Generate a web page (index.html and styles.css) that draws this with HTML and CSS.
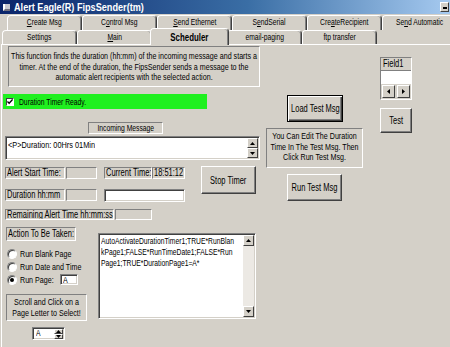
FILE: index.html
```html
<!DOCTYPE html>
<html lang="en">

<head>
    <meta charset="UTF-8">
    <title>Alert Eagle(R) FipsSender(tm)</title>
    <link rel="stylesheet" href="styles.css">
</head>

<body>

    <div class="titlebar">
        <span class="app-icon"></span>
        <span class="title">Alert Eagle(R) FipsSender(tm)</span>
        <span class="min-btn"><i></i></span>
    </div>

    <div class="tabs">
        <div class="tab-row back">
            <div class="tab"><span class="sqc"><u>C</u>reate Msg</span></div>
            <div class="tab"><span class="sqc">C<u>o</u>ntrol Msg</span></div>
            <div class="tab"><span class="sqc"><u>S</u>end Ethernet</span></div>
            <div class="tab"><span class="sqc">S<u>e</u>ndSerial</span></div>
            <div class="tab"><span class="sqc">Cre<u>a</u>teRecipient</span></div>
            <div class="tab"><span class="sqc">Se<u>n</u>d Automatic</span></div>
        </div>
        <div class="tab-row front">
            <div class="tab"><span class="sqc">Settings</span></div>
            <div class="tab"><span class="sqc"><u>M</u>ain</span></div>
            <div class="tab active"><span class="sqc">Scheduler</span></div>
            <div class="tab"><span class="sqc">email-paging</span></div>
            <div class="tab"><span class="sqc">ftp transfer</span></div>
        </div>
    </div>

    <div class="panel">

        <div class="col-left">
            <div class="box desc">
                <div class="sqb">This function finds the duration (hh:mm) of the incoming message and starts a<br>timer. At the end of the duration, the FipsSender sends a message to the<br>automatic alert recipients with the selected action.</div>
            </div>

            <div class="ready">
                <span class="check">
                    <svg width="7" height="7" viewBox="0 0 7 7"><path d="M0.5 3.5l2 2 4-4.5" fill="none" stroke="#000" stroke-width="1.6"/></svg>
                </span>
                <span class="sq">Duration Timer Ready.</span>
            </div>

            <div class="box center incoming-label"><span class="sqc">Incoming Message</span></div>

            <div class="field scrollbox msg">
                <div class="scroll-text"><span class="sq">&lt;P&gt;Duration: 00Hrs 01Min</span></div>
                <div class="vscroll">
                    <span class="sbtn"><svg width="5" height="3" viewBox="0 0 5 3"><path d="M0 3h5L2.5 0z"/></svg></span>
                    <span class="sbtn"><svg width="5" height="3" viewBox="0 0 5 3"><path d="M0 0h5L2.5 3z"/></svg></span>
                </div>
            </div>

            <div class="timeblock">
                <div class="time-fields">
                    <div class="trow r1">
                        <span class="box lbl w60"><span class="sq">Alert Start Time:</span></span>
                        <span class="box val w31"></span>
                        <span class="box lbl w48 gap7"><span class="sq">Current Time:</span></span>
                        <span class="box val w33"><span class="sq">18:51:12</span></span>
                    </div>
                    <div class="trow r2">
                        <span class="box lbl w60"><span class="sq">Duration hh:mm</span></span>
                        <span class="box val w31"></span>
                        <span class="field input w81 gap7"></span>
                    </div>
                    <div class="trow r3">
                        <span class="box lbl w109"><span class="sq">Remaining Alert Time hh:mm:ss</span></span>
                        <span class="box val w37"></span>
                    </div>
                </div>
                <div class="btn stop"><span class="sqc">Stop Timer</span></div>
            </div>

            <div class="action">
                <div class="action-left">
                    <div class="box action-label"><span class="sq">Action To Be Taken:</span></div>
                    <div class="radios">
                        <div class="radio-row"><span class="radio"></span><span class="sq">Run Blank Page</span></div>
                        <div class="radio-row"><span class="radio"></span><span class="sq">Run Date and Time</span></div>
                        <div class="radio-row"><span class="radio on"></span><span class="sq run-page">Run Page:</span><span class="field page-box"><span class="sq">A</span></span></div>
                    </div>
                    <div class="box scroll-hint">
                        <div class="sqb">Scroll and Click on a<br>Page Letter to Select!</div>
                    </div>
                    <div class="field spinner">
                        <span class="spin-val"><span class="sq">A</span></span>
                        <span class="spin-btns">
                            <span class="sbtn"><svg width="5" height="3" viewBox="0 0 5 3"><path d="M0 3h5L2.5 0z"/></svg></span>
                            <span class="sbtn"><svg width="5" height="3" viewBox="0 0 5 3"><path d="M0 0h5L2.5 3z"/></svg></span>
                        </span>
                    </div>
                </div>
                <div class="field scrollbox actions-text">
                    <div class="scroll-text">
                        <div class="sqb">AutoActivateDurationTimer1;TRUE*RunBlan<br>kPage1;FALSE*RunTimeDate1;FALSE*Run<br>Page1;TRUE*DurationPage1=A*</div>
                    </div>
                    <div class="vscroll">
                        <span class="sbtn"><svg width="5" height="3" viewBox="0 0 5 3"><path d="M0 3h5L2.5 0z"/></svg></span>
                        <span class="sbtn"><svg width="5" height="3" viewBox="0 0 5 3"><path d="M0 0h5L2.5 3z"/></svg></span>
                    </div>
                </div>
            </div>
        </div>

        <div class="col-mid">
            <div class="btn load focus"><span class="sqc">Load Test Msg</span></div>
            <div class="box note">
                <div class="sqb">You Can Edit The Duration<br>Time In The Test Msg. Then<br>Click Run Test Msg.</div>
            </div>
            <div class="btn run"><span class="sqc">Run Test Msg</span></div>
        </div>

        <div class="col-right">
            <div class="field1">
                <div class="field1-head"><span class="sq">Field1</span></div>
                <div class="field1-body"></div>
                <div class="field1-nav">
                    <span class="sbtn"><svg width="3" height="5" viewBox="0 0 3 5"><path d="M3 0v5L0 2.5z"/></svg></span>
                    <span class="sbtn"><svg width="3" height="5" viewBox="0 0 3 5"><path d="M0 0v5L3 2.5z"/></svg></span>
                </div>
            </div>
            <div class="btn test"><span class="sqc">Test</span></div>
        </div>

    </div>

</body>

</html>
```

FILE: styles.css
```css
* {
    box-sizing: border-box;
}

body {
    margin: 0;
    width: 450px;
    height: 347px;
    overflow: hidden;
    background: #d4d0c8;
    color: #000;
    font-family: "Liberation Sans", Arial, sans-serif;
    font-size: 9px;
}

/* the old form font is narrow: squeeze text sideways */
.sq,
.sqc {
    display: inline-block;
    flex: none;
    white-space: nowrap;
    transform: scaleX(0.75);
    transform-origin: left center;
}

.sqc {
    transform-origin: center center;
}

.sqb {
    width: 133.34%;
    transform: scaleX(0.75);
    transform-origin: left top;
    white-space: nowrap;
}

/* title bar */
.titlebar {
    height: 14px;
    display: flex;
    align-items: center;
    padding-left: 3px;
    background: linear-gradient(to right, #0a246a, #3a6ea5 55%, #a6caf0);
}

.app-icon {
    width: 7px;
    height: 7px;
    background: #c8c8d0;
    border-left: 2px solid #fff;
    border-bottom: 2px solid #707080;
}

.title {
    display: inline-block;
    margin-left: 4px;
    color: #fff;
    font-weight: bold;
    font-size: 11px;
    white-space: nowrap;
    transform: scaleX(0.83);
    transform-origin: left center;
}

.min-btn {
    width: 9px;
    height: 10px;
    margin: 0 1px 0 auto;
    display: flex;
    align-items: flex-end;
    justify-content: center;
    padding-bottom: 2px;
    background: #d4d0c8;
    border: 1px solid;
    border-color: #fff #404040 #404040 #fff;
}

.min-btn i {
    width: 4px;
    height: 2px;
    background: #000;
}

/* tabs */
.tabs {
    padding-top: 1px;
}

.tab-row {
    display: flex;
    height: 15px;
}

.tab-row.back {
    margin-left: 7px;
}

.tab-row.front {
    height: 14px;
    margin-left: 2px;
}

.tab {
    flex: 0 0 75px;
    height: 100%;
    display: flex;
    justify-content: center;
    line-height: 13px;
    white-space: nowrap;
    border: 1px solid;
    border-bottom: none;
    border-color: #fff #404040 transparent #fff;
    border-radius: 4px 4px 0 0;
    box-shadow: inset -1px 0 #808080;
}

.tab.active {
    position: relative;
    z-index: 1;
    height: 17px;
    margin: -2px -2px 0;
    flex-basis: 79px;
    background: #d4d0c8;
    font-weight: bold;
    font-size: 10.5px;
    line-height: 16px;
}

/* panel */
.panel {
    height: 303px;
    margin-left: 1px;
    padding-left: 1px;
    display: flex;
    border-top: 1px solid #fff;
    border-left: 1px solid #fff;
}

.box {
    display: block;
    border: 1px solid;
    border-color: #808080 #fff #fff #808080;
    white-space: nowrap;
    overflow: hidden;
}

.box.center {
    display: flex;
    justify-content: center;
}

.field {
    background: #fff;
    border: 1px solid;
    border-color: #808080 #fff #fff #808080;
    box-shadow: inset 1px 1px #404040, inset -1px -1px #d4d0c8;
}

.btn {
    display: flex;
    align-items: center;
    justify-content: center;
    white-space: nowrap;
    border: 1px solid;
    border-color: #fff #404040 #404040 #fff;
    box-shadow: inset -1px -1px #808080;
    font-size: 10px;
}

.btn.focus {
    border-color: #000;
    box-shadow: inset 1px 1px #fff, inset -1px -1px #404040, inset -2px -2px #808080;
}

/* left column */
.col-left {
    width: 258px;
    flex: none;
}

.desc {
    width: 252px;
    height: 41px;
    margin: 1px 0 0 5px;
    padding-top: 4px;
    text-align: center;
    line-height: 10.5px;
    font-size: 9.5px;
}

.ready {
    width: 204px;
    height: 15px;
    margin-top: 7px;
    display: flex;
    align-items: center;
    padding-left: 3px;
    background: #1ff01f;
}

.check {
    width: 8px;
    height: 8px;
    margin-right: 5px;
    display: flex;
    align-items: center;
    justify-content: center;
    background: #fff;
    border: 1px solid;
    border-color: #404040 #fff #fff #404040;
}

.incoming-label {
    width: 75px;
    height: 12px;
    margin: 13px 0 0 85px;
    line-height: 10px;
}

.scrollbox {
    display: flex;
}

.scroll-text {
    flex: 1;
    padding: 2px 2px;
    line-height: 11px;
    white-space: nowrap;
    overflow: hidden;
}

.msg .scroll-text {
    font-size: 9.8px;
}

.vscroll {
    width: 11px;
    display: flex;
    flex-direction: column;
    justify-content: space-between;
    background: #ece9e4;
    margin: 1px 1px 1px 0;
}

.sbtn {
    height: 11px;
    display: flex;
    align-items: center;
    justify-content: center;
    background: #d4d0c8;
    border: 1px solid;
    border-color: #fff #404040 #404040 #fff;
}

.msg {
    width: 255px;
    height: 24px;
    margin: 2px 0 0 2px;
}

.timeblock {
    display: flex;
    margin: 6px 0 0 2px;
}

.time-fields {
    width: 180px;
    font-size: 10px;
}

.trow {
    display: flex;
    height: 12px;
}

.trow .box {
    line-height: 10px;
    padding-left: 1px;
}

.trow.r1 {
    margin-top: 1px;
}

.trow.r2 {
    margin-top: 10px;
}

.trow.r3 {
    height: 11px;
    margin-top: 8px;
}

.trow.r3 .box {
    line-height: 9px;
}

.w31 { width: 31px; margin-left: 1px; }
.w33 { width: 33px; }
.w37 { width: 37px; margin-left: 1px; }
.w48 { width: 48px; }
.w60 { width: 60px; }
.w81 { width: 81px; height: 13px; }
.w109 { width: 109px; }

.gap7 {
    margin-left: 7px;
}

.stop {
    width: 55px;
    height: 28px;
    margin-left: 16px;
}

.action {
    display: flex;
    margin: 7px 0 0 3px;
}

.action-left {
    width: 81px;
}

.action-label {
    width: 70px;
    height: 14px;
    padding-left: 1px;
    line-height: 12px;
    font-size: 10px;
}

.radios {
    margin-top: 6px;
}

.radio-row {
    height: 13px;
    display: flex;
    align-items: center;
    font-size: 9.5px;
}

.radio {
    flex: none;
    width: 10px;
    height: 10px;
    margin: 0 3px 0 1px;
    border-radius: 50%;
    background: #fff;
    border: 1px solid;
    border-color: #808080 #fff #fff #808080;
    box-shadow: inset 1px 1px #404040;
    display: flex;
    align-items: center;
    justify-content: center;
}

.radio.on::after {
    content: "";
    width: 4px;
    height: 4px;
    border-radius: 50%;
    background: #000;
}

.run-page {
    width: 40px;
}

.page-box {
    flex: none;
    width: 18px;
    height: 11px;
    padding-left: 2px;
    line-height: 9px;
}

.scroll-hint {
    width: 81px;
    height: 27px;
    margin-top: 8px;
    text-align: center;
    line-height: 11px;
    padding-top: 1px;
    font-size: 9.5px;
}

.spinner {
    width: 33px;
    height: 13px;
    margin: 6px 0 0 26px;
    display: flex;
}

.spin-val {
    flex: 1;
    padding-left: 3px;
    line-height: 11px;
}

.spin-btns {
    width: 9px;
    display: flex;
    flex-direction: column;
    margin: 1px 1px 1px 0;
}

.spin-btns .sbtn {
    height: 5px;
}

.actions-text {
    width: 158px;
    height: 86px;
    margin: 6px 0 0 11px;
}

/* middle column */
.col-mid {
    width: 97px;
    margin-left: 5px;
    flex: none;
}

.load {
    width: 56px;
    height: 27px;
    margin: 50px 0 0 21px;
}

.note {
    width: 97px;
    height: 40px;
    margin-top: 6px;
    padding-top: 2px;
    text-align: center;
    line-height: 10.5px;
    font-size: 9.5px;
}

.run {
    width: 55px;
    height: 27px;
    margin: 6px 0 0 21px;
}

/* right column */
.col-right {
    width: 32px;
    margin-left: 17px;
    flex: none;
}

.field1 {
    height: 43px;
    margin-top: 12px;
    display: flex;
    flex-direction: column;
    border: 1px solid;
    border-color: #808080 #fff #fff #808080;
}

.field1-head {
    height: 13px;
    padding-left: 2px;
    line-height: 12px;
    font-size: 10px;
    border-bottom: 1px solid #808080;
}

.field1-body {
    height: 13px;
    background: #fff;
}

.field1-nav {
    flex: 1;
    display: flex;
    gap: 2px;
    padding: 1px;
}

.field1-nav .sbtn {
    flex: 1;
    height: auto;
}

.test {
    height: 25px;
    margin-top: 8px;
}
```
